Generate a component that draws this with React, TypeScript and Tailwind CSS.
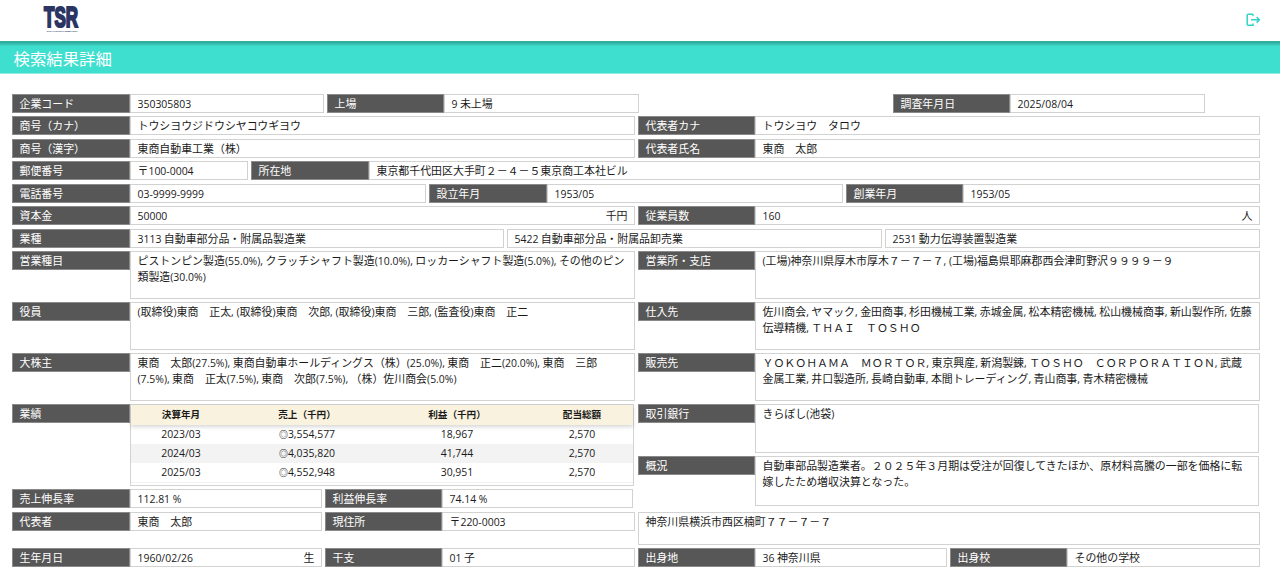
import type { ReactNode } from 'react';
import { clsx } from 'clsx';

interface FieldProps {
  label?: string;
  value: string;
  unit?: string;
  narrow?: boolean;
  className?: string;
  valueClassName?: string;
}

interface Performance {
  period: string;
  sales: string;
  profit: string;
  dividend: string;
}

const performances: Performance[] = [
  { period: '2023/03', sales: '3,554,577', profit: '18,967', dividend: '2,570' },
  { period: '2024/03', sales: '4,035,820', profit: '41,744', dividend: '2,570' },
  { period: '2025/03', sales: '4,552,948', profit: '30,951', dividend: '2,570' },
];

// Half-width runs use the Latin face at a slightly smaller size than the kanji/kana.
const MixedText = ({ children }: { children: string }) => (
  <>
    {children.split(/([!-~]+(?: [!-~]+)*)/).map((part, index) =>
      index % 2 === 1 ? (
        <span key={index} className="font-['Open_Sans','Noto_Sans',sans-serif] text-[10.45px] leading-none">
          {part}
        </span>
      ) : (
        part
      ),
    )}
  </>
);

const Label = ({ children, narrow }: { children: ReactNode; narrow?: boolean }) => (
  <div
    className={clsx(
      'h-[19px] shrink-0 border border-[#8a8a8a] bg-[#575757] pl-[6.5px] leading-[17px] text-white',
      narrow ? 'w-[117px]' : 'w-[118px]',
    )}
  >
    {children}
  </div>
);

const Field = ({ label, value, unit, narrow, className, valueClassName }: FieldProps) => (
  <div className={clsx('flex items-start', className)}>
    {label && <Label narrow={narrow}>{label}</Label>}
    <div
      className={clsx(
        'flex min-w-0 flex-1 justify-between border border-[#d2d2d0] bg-white px-[6.5px] whitespace-pre',
        valueClassName ?? 'h-[19px] leading-[17px]',
      )}
    >
      <span>
        <MixedText>{value}</MixedText>
      </span>
      {unit && <span>{unit}</span>}
    </div>
  </div>
);

const tall = 'h-12 leading-4';

const PerformanceTable = () => (
  <div className="flex h-[82px] w-[622px] items-start">
    <Label>業績</Label>
    <div className="h-[82px] flex-1 border border-[#d2d2d0]">
      <table className="w-full table-fixed border-collapse text-center">
        <colgroup>
          <col className="w-[100px]" />
          <col className="w-[152px]" />
          <col className="w-[148px]" />
          <col className="w-[102px]" />
        </colgroup>
        <thead className="relative bg-[#f9f2de] text-[9.6px] shadow-[0_2px_4px_rgba(0,0,0,0.16)]">
          <tr className="h-5 leading-[18px]">
            <th className="pb-0.5">決算年月</th>
            <th className="pb-0.5">売上（千円）</th>
            <th className="pb-0.5">利益（千円）</th>
            <th className="pb-0.5">配当総額</th>
          </tr>
        </thead>
        <tbody>
          {performances.map((item) => (
            <tr key={item.period} className="h-[19px] leading-[17px] even:bg-[#f3f3f3]">
              <td className="pb-0.5"><MixedText>{item.period}</MixedText></td>
              <td className="pb-0.5">
                <span className="text-[9px] leading-none font-medium">◎</span>
                <MixedText>{item.sales}</MixedText>
              </td>
              <td className="pb-0.5"><MixedText>{item.profit}</MixedText></td>
              <td className="pb-0.5"><MixedText>{item.dividend}</MixedText></td>
            </tr>
          ))}
        </tbody>
      </table>
      <div className="border-t border-[#f2f2f2]" />
    </div>
  </div>
);

const Logo = () => (
  <svg width="36" height="29" viewBox="0 0 36 29" fill="#2a3563" className="overflow-visible" aria-label="TSR">
    <text
      x="1"
      y="22.2"
      fontFamily="Liberation Sans, Arial, sans-serif"
      fontWeight="700"
      fontSize="29"
      textLength="34"
      lengthAdjust="spacingAndGlyphs"
      stroke="#2a3563"
      strokeWidth="2.2"
    >
      TSR
    </text>
    <text
      x="3.5"
      y="26.8"
      fontFamily="Liberation Sans, Arial, sans-serif"
      fontWeight="700"
      fontSize="2.4"
      textLength="31"
      lengthAdjust="spacingAndGlyphs"
    >
      TOKYO SHOKO RESEARCH
    </text>
  </svg>
);

const LogoutIcon = () => (
  <svg width="15" height="14" viewBox="0 0 15 14" fill="none" stroke="#2fd6c6" strokeWidth="1.5">
    <path d="M7 1.2H2.2Q1.2 1.2 1.2 2.2V11.3Q1.2 12.3 2.2 12.3H7V10.6M7 1.2V2.9" />
    <path d="M5 6.8H13.2M10.6 4L13.4 6.8L10.6 9.6" />
  </svg>
);

export default function App() {
  return (
    <div className="h-[582px] w-[1280px] overflow-hidden bg-white font-['Noto_Sans_CJK_JP',sans-serif] text-[10.93px] text-[#1a1a1a]">
      <header className="flex h-[41px] items-start justify-between pt-[5px] pr-[19px] pl-[43px]">
        <Logo />
        <button type="button" aria-label="ログアウト" className="mt-2">
          <LogoutIcon />
        </button>
      </header>

      <div className="h-[33px] border-b border-[#8eeee4] bg-[linear-gradient(#30ae9f_0,#30ae9f_2px,#38c6b8_3px,#38c6b8_4px,#3fdfd0_5px)] pl-[13.5px]">
        <h1 className="pt-[2px] text-[16.4px] leading-[30px] text-white">検索結果詳細</h1>
      </div>

      <main className="flex flex-col pt-5 pl-3">
        <div className="flex h-[22px]">
          <Field label="企業コード" value="350305803" className="w-[312px]" />
          <Field label="上場" value="9 未上場" narrow className="ml-[3px] w-[312px]" />
          <Field label="調査年月日" value="2025/08/04" narrow className="ml-[254px] w-[312px]" />
        </div>
        <div className="flex h-[23px] gap-[3px]">
          <Field label="商号（カナ）" value="トウシヨウジドウシヤコウギヨウ" className="w-[623px]" />
          <Field label="代表者カナ" value="トウシヨウ　タロウ" narrow className="w-[622px]" />
        </div>
        <div className="flex h-[22px] gap-[3px]">
          <Field label="商号（漢字）" value="東商自動車工業（株）" className="w-[623px]" />
          <Field label="代表者氏名" value="東商　太郎" narrow className="w-[622px]" />
        </div>
        <div className="flex h-[23px] gap-[3px]">
          <Field label="郵便番号" value="〒100-0004" className="w-[236px]" />
          <Field label="所在地" value="東京都千代田区大手町２－４－５東京商工本社ビル" className="w-[1009px]" />
        </div>
        <div className="flex h-[22px] gap-[3px]">
          <Field label="電話番号" value="03-9999-9999" className="w-[414px]" />
          <Field label="設立年月" value="1953/05" className="w-[414px]" />
          <Field label="創業年月" value="1953/05" narrow className="w-[414px]" />
        </div>
        <div className="flex h-[23px] gap-[3px]">
          <Field label="資本金" value="50000" unit="千円" className="w-[623px]" />
          <Field label="従業員数" value="160" unit="人" narrow className="w-[622px]" />
        </div>
        <div className="flex h-[22px] gap-[3px]">
          <Field label="業種" value="3113 自動車部分品・附属品製造業" className="w-[492px]" />
          <Field value="5422 自動車部分品・附属品卸売業" className="w-[375px]" />
          <Field value="2531 動力伝導装置製造業" className="w-[375px]" />
        </div>

        <div className="flex h-[261px] gap-[3px]">
          <div className="w-[623px]">
            <Field
              label="営業種目"
              value={'ピストンピン製造(55.0%), クラッチシャフト製造(10.0%), ロッカーシャフト製造(5.0%), その他のピン\n類製造(30.0%)'}
              className="h-[51px]"
              valueClassName={tall}
            />
            <Field
              label="役員"
              value="(取締役)東商　正太, (取締役)東商　次郎, (取締役)東商　三郎, (監査役)東商　正二"
              className="h-[51px]"
              valueClassName={tall}
            />
            <Field
              label="大株主"
              value={'東商　太郎(27.5%), 東商自動車ホールディングス（株）(25.0%), 東商　正二(20.0%), 東商　三郎\n(7.5%), 東商　正太(7.5%), 東商　次郎(7.5%), （株）佐川商会(5.0%)'}
              className="h-[51px]"
              valueClassName={tall}
            />
            <PerformanceTable />
            <div className="mt-[3px] flex gap-[3px]">
              <Field label="売上伸長率" value="112.81 %" className="w-[310px]" />
              <Field label="利益伸長率" value="74.14 %" narrow className="w-[308px]" />
            </div>
          </div>
          <div className="w-[622px]">
            <Field
              label="営業所・支店"
              value="(工場)神奈川県厚木市厚木７－７－７, (工場)福島県耶麻郡西会津町野沢９９９９－９"
              narrow
              className="h-[51px]"
              valueClassName={tall}
            />
            <Field
              label="仕入先"
              value={'佐川商会, ヤマック, 金田商事, 杉田機械工業, 赤城金属, 松本精密機械, 松山機械商事, 新山製作所, 佐藤\n伝導精機, ＴＨＡＩ　ＴＯＳＨＯ'}
              narrow
              className="h-[51px]"
              valueClassName={tall}
            />
            <Field
              label="販売先"
              value={'ＹＯＫＯＨＡＭＡ　ＭＯＲＴＯＲ, 東京興産, 新潟製錬, ＴＯＳＨＯ　ＣＯＲＰＯＲＡＴＩＯＮ, 武蔵\n金属工業, 井口製造所, 長崎自動車, 本間トレーディング, 青山商事, 青木精密機械'}
              narrow
              className="h-[51px]"
              valueClassName={tall}
            />
            <Field
              label="取引銀行"
              value="きらぼし(池袋)"
              narrow
              className="h-[52px] w-[621px]"
              valueClassName="h-[49px] leading-4"
            />
            <Field
              label="概況"
              value={'自動車部品製造業者。２０２５年３月期は受注が回復してきたほか、原材料高騰の一部を価格に転\n嫁したため増収決算となった。'}
              narrow
              className="w-[621px]"
              valueClassName="h-[50px] leading-4"
            />
          </div>
        </div>

        <div className="flex h-9 gap-[3px]">
          <Field label="代表者" value="東商　太郎" className="w-[310px]" />
          <Field label="現住所" value="〒220-0003" narrow className="w-[310px]" />
          <Field
            value="神奈川県横浜市西区楠町７７－７－７"
            className="w-[622px]"
            valueClassName="h-[33px] leading-[17px]"
          />
        </div>
        <div className="flex gap-[3px]">
          <Field label="生年月日" value="1960/02/26" unit="生" className="w-[310px]" />
          <Field label="干支" value="01 子" narrow className="w-[310px]" />
          <Field label="出身地" value="36 神奈川県" narrow className="w-[309px]" />
          <Field label="出身校" value="その他の学校" narrow className="w-[310px]" />
        </div>
      </main>
    </div>
  );
}
